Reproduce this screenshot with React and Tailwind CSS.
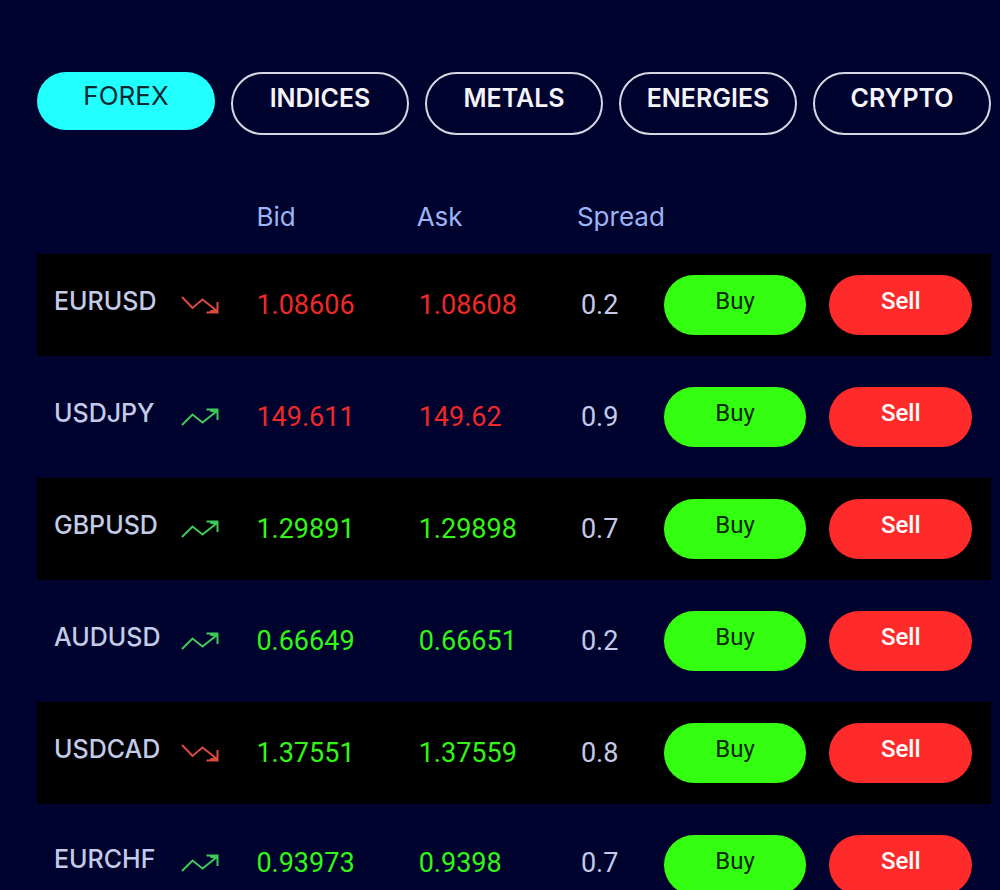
import { useState } from 'react';
import clsx from 'clsx';

const tabs = ['FOREX', 'INDICES', 'METALS', 'ENERGIES', 'CRYPTO'];

const quotes = [
  { symbol: 'EURUSD', trend: 'down', bid: '1.08606', ask: '1.08608', spread: '0.2', falling: true },
  { symbol: 'USDJPY', trend: 'up', bid: '149.611', ask: '149.62', spread: '0.9', falling: true },
  { symbol: 'GBPUSD', trend: 'up', bid: '1.29891', ask: '1.29898', spread: '0.7' },
  { symbol: 'AUDUSD', trend: 'up', bid: '0.66649', ask: '0.66651', spread: '0.2' },
  { symbol: 'USDCAD', trend: 'down', bid: '1.37551', ask: '1.37559', spread: '0.8' },
  { symbol: 'EURCHF', trend: 'up', bid: '0.93973', ask: '0.9398', spread: '0.7' },
];

const numberCell = "font-['Roboto',sans-serif] text-[27px] group-last:pb-1";

function TrendIcon({ trend }) {
  const down = trend === 'down';

  return (
    <svg width="38" height="20" viewBox="0 0 38 20" fill="none" strokeWidth="2" className={down ? 'stroke-[#dc4b40]' : 'stroke-[#3fc95a]'} role="img" aria-label={`Trending ${trend}`}>
      {down ? (
        <path d="M1 2 L11.5 13 L21.5 4.5 L36 16 M36.5 7 V17.5 H25.5 M29 16.5 L36 15" />
      ) : (
        <path d="M1 18 L11.5 7.5 L21.5 15.5 L36 4 M36.5 13 V2.5 H25.5 M29 3.5 L36 5" />
      )}
    </svg>
  );
}

export default function App() {
  const [activeTab, setActiveTab] = useState('FOREX');

  return (
    <main className="h-screen overflow-hidden bg-[#00032d] pt-[72px] pr-[9px] pl-[37px] font-['Inter',sans-serif] text-[25px] leading-8">
      <nav className="grid grid-cols-5 items-start gap-4" aria-label="Markets">
        {tabs.map((tab) => (
          <button
            key={tab}
            type="button"
            onClick={() => setActiveTab(tab)}
            className={clsx(
              'rounded-full',
              tab === activeTab ? 'bg-[#22ffff] pt-2 pb-[18px] text-[26px] leading-8 text-[#062a30]' : 'border-2 border-[#d5d7e2] pt-2 pb-[19px] font-semibold text-[#f4f4fa]',
            )}
          >
            {tab}
          </button>
        ))}
      </nav>

      <table className="mt-[56px] w-full table-fixed border-separate border-spacing-x-0 border-spacing-y-[10px] text-left">
        <colgroup>
          <col className="w-[23%]" />
          <col className="w-[16.8%]" />
          <col className="w-[16.8%]" />
          <col className="w-[9.1%]" />
          <col className="w-[34.3%]" />
        </colgroup>
        <thead>
          <tr className="text-[26px] leading-8 text-[#9db4f5]">
            <td />
            <th className="pb-[11px] font-normal">Bid</th>
            <th className="pb-[11px] font-normal">Ask</th>
            <th className="pb-[11px] font-normal">Spread</th>
            <td />
          </tr>
        </thead>
        <tbody>
          {quotes.map((quote) => (
            <tr key={quote.symbol} className="group h-[102px] odd:bg-black">
              <th className="pl-[17px] font-medium group-last:pb-1">
                <div className="flex items-center justify-between pr-[37px] text-[#c3cbe8]">
                  <span className="pb-2">{quote.symbol}</span>
                  <TrendIcon trend={quote.trend} />
                </div>
              </th>
              <td className={clsx(numberCell, quote.falling ? 'text-[#f0282a]' : 'text-[#33f516]')}>{quote.bid}</td>
              <td className={clsx(numberCell, 'pl-0.5', quote.falling ? 'text-[#f0282a]' : 'text-[#33f516]')}>{quote.ask}</td>
              <td className={clsx(numberCell, 'pl-1 text-[#c3cbe8]')}>{quote.spread}</td>
              <td className="pr-[19px]">
                <div className="grid grid-cols-2 gap-[23px] font-['Roboto',sans-serif] text-2xl">
                  <button type="button" className="h-[60px] rounded-full bg-[#35ff10] pb-2 text-[#05280a]">Buy</button>
                  <button type="button" className="h-[60px] rounded-full bg-[#ff2b2b] pb-2 font-medium text-white">Sell</button>
                </div>
              </td>
            </tr>
          ))}
        </tbody>
      </table>
    </main>
  );
}
